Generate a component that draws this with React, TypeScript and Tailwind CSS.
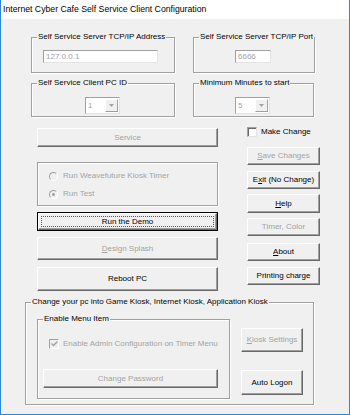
import React from 'react'

type BtnProps = {
  label: React.ReactNode
  disabled?: boolean
  className?: string
}

const Btn: React.FC<BtnProps> = ({ label, disabled, className }) => (
  <div
    className={`flex items-center justify-center bg-[#f0f0f0] border border-t-white border-l-white border-r-[#696969] border-b-[#696969] shadow-[inset_-1px_-1px_0_#a0a0a0] text-[8px] leading-[10px] whitespace-nowrap ${disabled ? 'text-[#a3a3a3]' : 'text-black'} ${className ?? ''}`}
  >
    {label}
  </div>
)

// etched group box; padding goes on the inner div so the legend stays put
const Group: React.FC<{ title?: string; className?: string; inner?: string; children?: React.ReactNode }>
  = ({ title, className, inner, children }) => (
    <fieldset className={`border border-[#a0a0a0] shadow-[1px_1px_0_white,inset_1px_1px_0_white] ${className ?? ''}`}>
      {title && (
        <legend className="ml-[5px] px-[1px] text-[8px] leading-[10px] text-black whitespace-nowrap">{title}</legend>
      )}
      <div className={inner}>{children}</div>
    </fieldset>
  )

const TextBox: React.FC<{ value: string; className?: string }> = ({ value, className }) => (
  <div className={`h-[13px] bg-white border border-t-[#a0a0a0] border-l-[#a0a0a0] border-r-[#e3e3e3] border-b-[#e3e3e3] pl-[2px] text-[8px] leading-[11px] text-[#a3a3a3] ${className ?? ''}`}>
    {value}
  </div>
)

const Combo: React.FC<{ value: string; className?: string }> = ({ value, className }) => (
  <div className={`h-[17px] w-[35px] flex bg-white border border-t-[#a0a0a0] border-l-[#a0a0a0] border-r-[#e3e3e3] border-b-[#e3e3e3] ${className ?? ''}`}>
    <div className="flex-1 pl-[2px] text-[8px] leading-[15px] text-[#a3a3a3]">{value}</div>
    <div className="w-[13px] my-[1px] mr-[1px] flex items-center justify-center bg-[#f0f0f0] border border-t-white border-l-white border-r-[#a0a0a0] border-b-[#a0a0a0]">
      <svg width="5" height="3" viewBox="0 0 5 3"><path d="M0 0h5L2.5 3z" fill="#a3a3a3" /></svg>
    </div>
  </div>
)

const Radio: React.FC<{ checked?: boolean; label: string }> = ({ checked, label }) => (
  <div className="flex items-center h-[10px]">
    <div className="w-[9px] h-[9px] rounded-full border border-t-[#a0a0a0] border-l-[#a0a0a0] border-r-white border-b-white bg-[#f0f0f0] flex items-center justify-center">
      {checked && <div className="w-[3px] h-[3px] rounded-full bg-[#a3a3a3]" />}
    </div>
    <span className="ml-[5px] text-[8px] leading-[10px] text-[#a3a3a3]">{label}</span>
  </div>
)

export default function App() {
  return (
    <div className="w-[350px] h-[415px] flex flex-col border-x border-b border-[#2b88d8] font-['Liberation_Sans',Arial,sans-serif]">
      <div className="h-[19px] bg-white pl-[2px] flex items-center text-[8.7px] text-black">
        Internet Cyber Cafe Self Service Client Configuration
      </div>
      <div className="flex-1 bg-[#f0f0f0] pt-[13px]">
        <div className="flex ml-[30px]">
          <Group title="Self Service Server TCP/IP Address" className="w-[144px] h-[41px]" inner="pl-[11px] pt-[8px]">
            <TextBox value="127.0.0.1" className="w-[115px]" />
          </Group>
          <Group title="Self Service Server TCP/IP Port" className="ml-[18px] w-[121px] h-[41px]" inner="pl-[41px] pt-[8px]">
            <TextBox value="6666" className="w-[36px]" />
          </Group>
        </div>
        <div className="flex ml-[30px] mt-[5px]">
          <Group title="Self Service Client PC ID" className="w-[144px] h-[39px]" inner="pl-[53px] pt-[9px]">
            <Combo value="1" />
          </Group>
          <Group title="Minimum Minutes to start" className="ml-[18px] w-[121px] h-[39px]" inner="pl-[41px] pt-[9px]">
            <Combo value="5" />
          </Group>
        </div>

        <div className="flex ml-[36px] mt-[10px]">
          <div className="w-[181px] pt-[1px] flex flex-col">
            <Btn label="Service" disabled className="h-[19px]" />
            <Group className="mt-[15px] h-[44px]" inner="pl-[11px] pt-[8px]">
              <Radio label="Run Weavefuture Kiosk Timer" />
              <div className="mt-[8px]"><Radio checked label="Run Test" /></div>
            </Group>
            <div className="mt-[6px] h-[19px] border border-black relative">
              <Btn label="Run the Demo" className="h-full" />
              <div className="absolute inset-[3px] border border-dotted border-[#555]" />
            </div>
            <Btn label={<><u>D</u>esign Splash</>} disabled className="mt-[6px] h-[23px]" />
            <Btn label="Reboot PC" className="mt-[7px] h-[24px]" />
          </div>

          <div className="ml-[29px] w-[73px] flex flex-col">
            <div className="flex items-center h-[10px]">
              <div className="w-[10px] h-[10px] bg-white border border-t-[#a0a0a0] border-l-[#a0a0a0] border-r-[#e3e3e3] border-b-[#e3e3e3] shadow-[inset_1px_1px_0_#696969]" />
              <span className="ml-[4px] text-[8px] leading-[10px] text-black">Make Change</span>
            </div>
            <Btn label={<><u>S</u>ave Changes</>} disabled className="mt-[10px] h-[18px]" />
            <Btn label={<>E<u>x</u>it (No Change)</>} className="mt-[6px] h-[18px]" />
            <Btn label={<><u>H</u>elp</>} className="mt-[5px] h-[19px]" />
            <Btn label="Timer, Color" disabled className="mt-[5px] h-[18px]" />
            <Btn label={<><u>A</u>bout</>} className="mt-[7px] h-[18px]" />
            <Btn label="Printing charge" className="mt-[6px] h-[18px]" />
          </div>
        </div>

        <Group
          title="Change your pc into Game Kiosk, Internet Kiosk, Application Kiosk"
          className="ml-[24px] mt-[6px] w-[289px] h-[108px]"
          inner="pl-[11px] pt-[7px] flex"
        >
          <Group title="Enable Menu Item" className="w-[193px] h-[85px]" inner="pl-[11px] pt-[15px]">
            <div className="flex items-center h-[10px]">
              <div className="w-[10px] h-[10px] bg-[#f0f0f0] border border-t-[#a0a0a0] border-l-[#a0a0a0] border-r-white border-b-white flex items-center justify-center">
                <svg width="7" height="6" viewBox="0 0 7 6">
                  <path d="M0.5 2.5 L2.5 4.5 L6.5 0.5" stroke="#a3a3a3" strokeWidth="1.5" fill="none" />
                </svg>
              </div>
              <span className="ml-[4px] text-[8px] leading-[10px] text-[#a3a3a3]">Enable Admin Configuration on Timer Menu</span>
            </div>
            <Btn label="Change Password" disabled className="mt-[20px] -ml-[6px] w-[175px] h-[19px]" />
          </Group>
          <div className="ml-[11px] w-[62px] flex flex-col">
            <Btn label={<><u>K</u>iosk Settings</>} disabled className="mt-[14px] h-[24px]" />
            <Btn label="Auto Logon" className="mt-[18px] h-[25px]" />
          </div>
        </Group>
      </div>
    </div>
  )
}
